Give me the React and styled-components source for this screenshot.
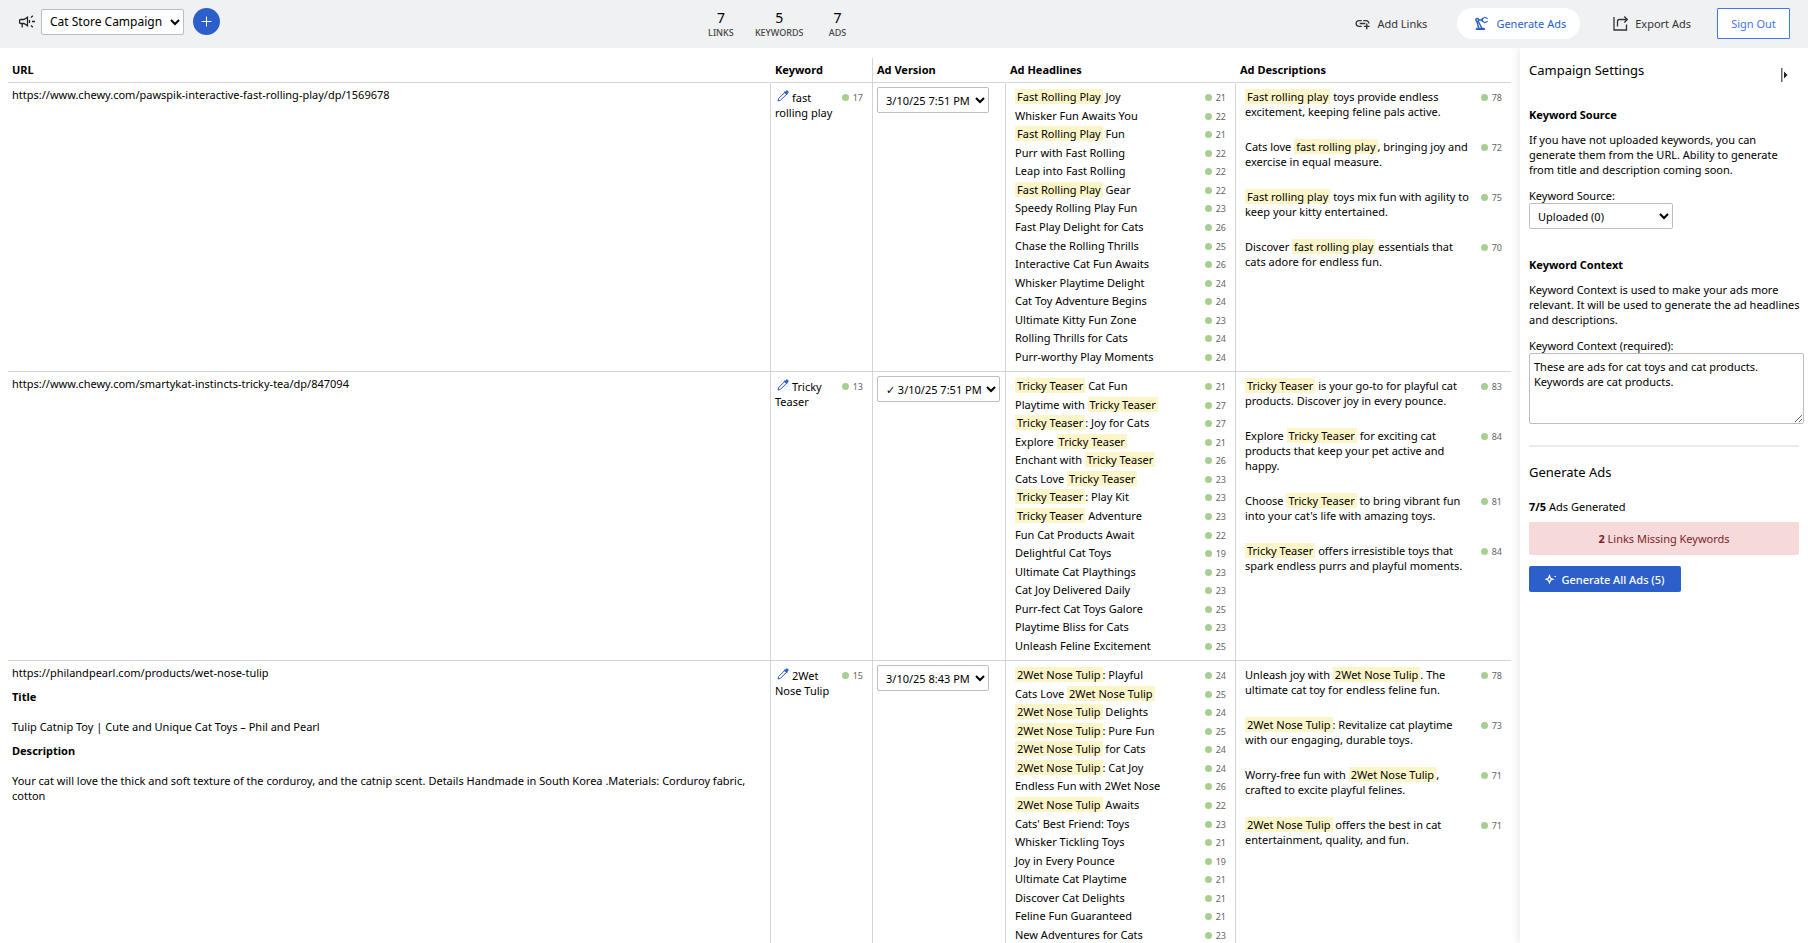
import React from "react";
import styled, { createGlobalStyle, css } from "styled-components";
import { MdAddLink, MdOutlinePrecisionManufacturing } from "react-icons/md";

const GlobalStyle = createGlobalStyle`
  *, *::before, *::after { box-sizing: border-box; }
  body {
    margin: 0;
    background: #fff;
    color: #000;
    font-family: "Noto Sans", sans-serif;
    font-size: 11px;
    line-height: 15px;
  }
  button, select, textarea { font-family: inherit; color: inherit; }
`;

const Page = styled.div`
  display: flex;
  flex-direction: column;
  height: 100vh;
  overflow: hidden;
`;

const TopBar = styled.header`
  display: flex;
  justify-content: space-between;
  align-items: flex-start;
  flex: none;
  height: 48px;
  padding: 8px 18px;
  background: #eff1f3;
`;

const CampaignPicker = styled.div`
  display: flex;
  align-items: center;
`;

const CampaignLabel = styled.label`
  display: flex;
  width: 23px;
`;

const Select = styled.select`
  height: 26px;
  width: ${(p) => p.$width}px;
  padding: 0 0 0 4px;
  border: 1px solid #bdbdbd;
  border-radius: 2px;
  background: #fff;
  font-size: ${(p) => (p.$small ? 11 : 12)}px;
`;

const AddButton = styled.button`
  display: grid;
  place-items: center;
  width: 27px;
  height: 27px;
  margin-left: 9px;
  padding: 0;
  border: 0;
  border-radius: 50%;
  background: #2c5fc9;
  color: #fff;
`;

const Stats = styled.dl`
  display: flex;
  gap: 21px;
  margin: 0;
  padding-top: 1px;
`;

const Stat = styled.div`
  display: flex;
  flex-direction: column-reverse;
  align-items: center;
  min-width: 26px;
`;

const StatValue = styled.dd`
  margin: 0;
  font-size: 14px;
  line-height: 18px;
`;

const StatLabel = styled.dt`
  font-size: 9px;
  line-height: 12px;
  font-weight: 500;
  color: #444;
  text-transform: uppercase;
`;

const Nav = styled.nav`
  display: flex;
  align-items: center;
  gap: 16px;
`;

const NavButton = styled.button`
  display: flex;
  align-items: center;
  gap: 6px;
  height: 31px;
  padding: 0 14px 0 16px;
  border: 0;
  border-radius: 16px;
  background: transparent;
  color: #333;
  font-size: 11px;
  svg { width: 17px; height: 17px; }
  &:last-of-type { margin-left: 0; }
  ${(p) =>
    p.$active &&
    css`
      background: #fff;
      color: #2c5fc9;
    `}
`;

const SignOut = styled.button`
  width: 73px;
  height: 31px;
  margin-left: -4px;
  padding: 0;
  border: 1px solid #3f76ee;
  border-radius: 1px;
  background: #fff;
  color: #3f76ee;
  font-size: 11px;
`;

const Body = styled.div`
  display: flex;
  flex: 1;
  min-height: 0;
`;

const Main = styled.main`
  flex: 1;
  min-width: 0;
  padding: 10px 9px 0 8px;
  overflow-y: auto;
  scrollbar-width: none;
`;

const AdTable = styled.table`
  width: 100%;
  table-layout: fixed;
  border-collapse: separate;
  border-spacing: 0;
`;

const Col = styled.col`
  width: ${(p) => (p.$width ? `${p.$width}px` : "auto")};
`;

const HeadCell = styled.th`
  height: 25px;
  padding: 0 4px 1px;
  border-bottom: 1px solid #d3d5d9;
  border-left: 1px solid ${(p) => (p.$divided ? "#d3d5d9" : "transparent")};
  text-align: left;
  font-weight: 700;
  font-size: 11px;
  &:first-child { border-left: 0; }
`;

const Cell = styled.td`
  height: 289px;
  padding: ${(p) => p.$pad || "4px"};
  border-bottom: 1px solid #d3d5d9;
  border-left: 1px solid #d3d5d9;
  vertical-align: top;
  &:first-child { border-left: 0; }
`;

const SubHeading = styled.h4`
  margin: 9px 0 15px;
  font-size: 11px;
  font-weight: 700;
`;

const Paragraph = styled.p`
  margin: 0;
`;

const KeywordRow = styled.div`
  display: flex;
  justify-content: space-between;
  align-items: flex-start;
`;

const KeywordText = styled.span`
  width: 62px;
  padding-top: 1px;
`;

const EditButton = styled.button`
  padding: 0;
  margin: 0 3px 0 2px;
  border: 0;
  background: none;
  color: #2c5fc9;
  height: 12px;
  line-height: 0;
`;

const Count = styled.span`
  display: inline-flex;
  align-items: center;
  gap: 4px;
  flex: none;
  height: 15px;
  margin-top: 1px;
  font-size: 9px;
  color: #666;
  &::before {
    content: "";
    width: 7px;
    height: 7px;
    border-radius: 50%;
    background: #a8ce92;
  }
`;

const HeadlineList = styled.ul`
  display: flex;
  flex-direction: column;
  justify-content: space-between;
  height: 276px;
  margin: 0;
  padding: 0;
  list-style: none;
`;

const DescriptionList = styled.ul`
  display: flex;
  flex-direction: column;
  gap: 20px;
  margin: 0;
  padding: 0;
  list-style: none;
`;

const AdLine = styled.li`
  display: flex;
  justify-content: space-between;
  align-items: flex-start;
  gap: 8px;
`;

const Mark = styled.mark`
  padding: 0 2px;
  background: #fcf5c8;
  color: inherit;
`;

const Sidebar = styled.aside`
  flex: none;
  width: 288px;
  padding: 13px 4px 13px 9px;
  background: #fff;
  box-shadow: 0 0 10px rgba(0, 0, 0, 0.12);
  clip-path: inset(0 0 0 -12px);
`;

const SidebarHead = styled.div`
  display: flex;
  justify-content: space-between;
  align-items: flex-start;
`;

const PanelTitle = styled.h2`
  margin: 0;
  font-size: 13px;
  line-height: 18px;
  font-weight: 400;
`;

const CollapseButton = styled.button`
  margin: 7px 16px 0 0;
  padding: 0;
  border: 0;
  background: none;
  line-height: 0;
`;

const Section = styled.section`
  padding-top: ${(p) => p.$top}px;
`;

const SectionTitle = styled.h3`
  margin: 0 0 10px;
  font-size: 11px;
  font-weight: 700;
`;

const FieldLabel = styled.label`
  display: block;
  margin-top: 11px;
`;

const ContextInput = styled.textarea`
  display: block;
  width: 100%;
  height: 71px;
  padding: 5px 4px;
  border: 1px solid #bdbdbd;
  border-radius: 2px;
  font-size: 11px;
  line-height: 15px;
`;

const Divider = styled.hr`
  height: 2px;
  margin: 21px 5px 16px 0;
  border: 0;
  background: #ebebeb;
`;

const Generated = styled.p`
  margin: 18px 0 8px;
`;

const Alert = styled.div`
  margin-right: 5px;
  padding: 9px;
  border-radius: 2px;
  background: #f6d9db;
  color: #7c2529;
  text-align: center;
`;

const PrimaryButton = styled.button`
  display: flex;
  align-items: center;
  justify-content: center;
  gap: 4px;
  width: 152px;
  height: 26px;
  margin-top: 11px;
  padding: 0;
  border: 0;
  border-radius: 2px;
  background: #2c5fc9;
  color: #fff;
  font-size: 11px;
  font-weight: 500;
`;

const CampaignIcon = () => (
  <svg width="18" height="16" viewBox="0 0 18 16" fill="none" stroke="#222" strokeWidth="1.300" aria-hidden="true">
    <path d="M9.500 3.200v8.600L6 9.500H2.600a1 1 0 0 1-1-1v-2a1 1 0 0 1 1-1H6z" />
    <path d="M4.200 9.500v4" />
    <path d="M11.500 6v3M14 7.500h3M13 3.500l1.800-1.700M13 11.500l1.800 1.700" />
  </svg>
);

const PlusIcon = () => (
  <svg width="11" height="11" viewBox="0 0 11 11" stroke="currentColor" aria-hidden="true">
    <path d="M5.500 .5v10M.5 5.500h10" />
  </svg>
);

const ExportIcon = () => (
  <svg viewBox="0 0 17 17" fill="none" stroke="currentColor" strokeWidth="1.300" aria-hidden="true">
    <path d="M2 2v13h12.500V9.500" />
    <path d="M5.500 11.500V6.500a2 2 0 0 1 2-2H15M12.300 1.500l3 3-3 3" />
  </svg>
);

const PencilIcon = () => (
  <svg width="12" height="12" viewBox="0 0 12 12" fill="none" stroke="currentColor" strokeLinejoin="round" aria-hidden="true">
    <path d="M1 11l.7-2.500L7.500 2.700l1.800 1.800-5.800 5.800z" />
    <path d="M7.200 2l.8.300 1.100-1.100a1 1 0 0 1 1.700 1.700L9.700 4l.3.800z" fill="currentColor" />
  </svg>
);

const SparkIcon = () => (
  <svg width="12" height="10" viewBox="0 0 12 10" fill="none" stroke="currentColor" strokeWidth="1.200" aria-hidden="true">
    <path d="M4.500 1.700L5.500 4.200 8 5.200 5.500 6.200 4.500 8.700 3.500 6.200 1 5.200 3.500 4.200z" />
    <path d="M9.500 2.500h1.500" />
  </svg>
);

const CollapseIcon = () => (
  <svg width="7" height="14" viewBox="0 0 7 14" aria-hidden="true">
    <path d="M0 0h1.500v14H0z" fill="#666" />
    <path d="M3 3.500L6.500 7 3 10.500z" fill="#222" />
  </svg>
);

const rows = [
  {
    url: "https://www.chewy.com/pawspik-interactive-fast-rolling-play/dp/1569678",
    keyword: "fast rolling play",
    count: 17,
    version: "3/10/25 7:51 PM",
    versionWidth: 112,
    headlines: [
      ["[Fast Rolling Play] Joy", 21], ["Whisker Fun Awaits You", 22], ["[Fast Rolling Play] Fun", 21],
      ["Purr with Fast Rolling", 22], ["Leap into Fast Rolling", 22], ["[Fast Rolling Play] Gear", 22],
      ["Speedy Rolling Play Fun", 23], ["Fast Play Delight for Cats", 26], ["Chase the Rolling Thrills", 25],
      ["Interactive Cat Fun Awaits", 26], ["Whisker Playtime Delight", 24], ["Cat Toy Adventure Begins", 24],
      ["Ultimate Kitty Fun Zone", 23], ["Rolling Thrills for Cats", 24], ["Purr-worthy Play Moments", 24],
    ],
    descriptions: [
      ["[Fast rolling play] toys provide endless excitement, keeping feline pals active.", 78],
      ["Cats love [fast rolling play], bringing joy and exercise in equal measure.", 72],
      ["[Fast rolling play] toys mix fun with agility to keep your kitty entertained.", 75],
      ["Discover [fast rolling play] essentials that cats adore for endless fun.", 70],
    ],
  },
  {
    url: "https://www.chewy.com/smartykat-instincts-tricky-tea/dp/847094",
    keyword: "Tricky Teaser",
    count: 13,
    version: "✓ 3/10/25 7:51 PM",
    versionWidth: 123,
    headlines: [
      ["[Tricky Teaser] Cat Fun", 21], ["Playtime with [Tricky Teaser]", 27], ["[Tricky Teaser]: Joy for Cats", 27],
      ["Explore [Tricky Teaser]", 21], ["Enchant with [Tricky Teaser]", 26], ["Cats Love [Tricky Teaser]", 23],
      ["[Tricky Teaser]: Play Kit", 23], ["[Tricky Teaser] Adventure", 23], ["Fun Cat Products Await", 22],
      ["Delightful Cat Toys", 19], ["Ultimate Cat Playthings", 23], ["Cat Joy Delivered Daily", 23],
      ["Purr-fect Cat Toys Galore", 25], ["Playtime Bliss for Cats", 23], ["Unleash Feline Excitement", 25],
    ],
    descriptions: [
      ["[Tricky Teaser] is your go-to for playful cat products. Discover joy in every pounce.", 83],
      ["Explore [Tricky Teaser] for exciting cat products that keep your pet active and happy.", 84],
      ["Choose [Tricky Teaser] to bring vibrant fun into your cat's life with amazing toys.", 81],
      ["[Tricky Teaser] offers irresistible toys that spark endless purrs and playful moments.", 84],
    ],
  },
  {
    url: "https://philandpearl.com/products/wet-nose-tulip",
    title: "Tulip Catnip Toy | Cute and Unique Cat Toys – Phil and Pearl",
    description:
      "Your cat will love the thick and soft texture of the corduroy, and the catnip scent. Details Handmade in South Korea .Materials: Corduroy fabric, cotton",
    keyword: "2Wet Nose Tulip",
    count: 15,
    version: "3/10/25 8:43 PM",
    versionWidth: 112,
    headlines: [
      ["[2Wet Nose Tulip]: Playful", 24], ["Cats Love [2Wet Nose Tulip]", 25], ["[2Wet Nose Tulip] Delights", 24],
      ["[2Wet Nose Tulip]: Pure Fun", 25], ["[2Wet Nose Tulip] for Cats", 24], ["[2Wet Nose Tulip]: Cat Joy", 24],
      ["Endless Fun with 2Wet Nose", 26], ["[2Wet Nose Tulip] Awaits", 22], ["Cats' Best Friend: Toys", 23],
      ["Whisker Tickling Toys", 21], ["Joy in Every Pounce", 19], ["Ultimate Cat Playtime", 21],
      ["Discover Cat Delights", 21], ["Feline Fun Guaranteed", 21], ["New Adventures for Cats", 23],
    ],
    descriptions: [
      ["Unleash joy with [2Wet Nose Tulip]. The ultimate cat toy for endless feline fun.", 78],
      ["[2Wet Nose Tulip]: Revitalize cat playtime with our engaging, durable toys.", 73],
      ["Worry-free fun with [2Wet Nose Tulip], crafted to excite playful felines.", 71],
      ["[2Wet Nose Tulip] offers the best in cat entertainment, quality, and fun.", 71],
    ],
  },
];

/* Text between square brackets is the keyword and gets highlighted. */
const Highlighted = ({ text }) => (
  <span>
    {text.split(/(\[[^\]]+\])/).map((part, i) =>
      part.startsWith("[") ? <Mark key={i}>{part.slice(1, -1)}</Mark> : part
    )}
  </span>
);

const AdLines = ({ as: List, items }) => (
  <List>
    {items.map(([text, count]) => (
      <AdLine key={text}>
        <Highlighted text={text} />
        <Count>{count}</Count>
      </AdLine>
    ))}
  </List>
);

const AdRow = ({ row }) => (
  <tr>
    <Cell>
      <Paragraph>{row.url}</Paragraph>
      {row.title && (
        <>
          <SubHeading>Title</SubHeading>
          <Paragraph>{row.title}</Paragraph>
          <SubHeading>Description</SubHeading>
          <Paragraph>{row.description}</Paragraph>
        </>
      )}
    </Cell>
    <Cell $pad="6px 9px 0 4px">
      <KeywordRow>
        <KeywordText>
          <EditButton type="button" aria-label={`Edit keyword ${row.keyword}`}>
            <PencilIcon />
          </EditButton>
          {row.keyword}
        </KeywordText>
        <Count>{row.count}</Count>
      </KeywordRow>
    </Cell>
    <Cell $pad="4px">
      <Select $small $width={row.versionWidth} aria-label={`Ad version for ${row.keyword}`}>
        <option>{row.version}</option>
      </Select>
    </Cell>
    <Cell $pad="6px 9px 0">
      <AdLines as={HeadlineList} items={row.headlines} />
    </Cell>
    <Cell $pad="6px 9px 0">
      <AdLines as={DescriptionList} items={row.descriptions} />
    </Cell>
  </tr>
);

export default function App() {
  return (
    <Page>
      <GlobalStyle />
      <TopBar>
        <CampaignPicker>
          <CampaignLabel htmlFor="campaign" aria-label="Campaign">
            <CampaignIcon />
          </CampaignLabel>
          <Select id="campaign" $width={143}>
            <option>Cat Store Campaign</option>
          </Select>
          <AddButton type="button" aria-label="Add campaign">
            <PlusIcon />
          </AddButton>
        </CampaignPicker>
        <Stats>
          {[["Links", 7], ["Keywords", 5], ["Ads", 7]].map(([label, value]) => (
            <Stat key={label}>
              <StatLabel>{label}</StatLabel>
              <StatValue>{value}</StatValue>
            </Stat>
          ))}
        </Stats>
        <Nav>
          <NavButton type="button"><MdAddLink />Add Links</NavButton>
          <NavButton type="button" $active><MdOutlinePrecisionManufacturing />Generate Ads</NavButton>
          <NavButton type="button"><ExportIcon />Export Ads</NavButton>
          <SignOut type="button">Sign Out</SignOut>
        </Nav>
      </TopBar>
      <Body>
        <Main>
          <AdTable>
            <colgroup>
              <Col />
              <Col $width={102} />
              <Col $width={133} />
              <Col $width={230} />
              <Col $width={276} />
            </colgroup>
            <thead>
              <tr>
                <HeadCell>URL</HeadCell>
                <HeadCell>Keyword</HeadCell>
                <HeadCell $divided>Ad Version</HeadCell>
                <HeadCell>Ad Headlines</HeadCell>
                <HeadCell>Ad Descriptions</HeadCell>
              </tr>
            </thead>
            <tbody>
              {rows.map((row) => <AdRow key={row.url} row={row} />)}
            </tbody>
          </AdTable>
        </Main>
        <Sidebar>
          <SidebarHead>
            <PanelTitle>Campaign Settings</PanelTitle>
            <CollapseButton type="button" aria-label="Collapse settings"><CollapseIcon /></CollapseButton>
          </SidebarHead>
          <Section $top={25}>
            <SectionTitle>Keyword Source</SectionTitle>
            <Paragraph>
              If you have not uploaded keywords, you can generate them from the URL. Ability to generate from title and
              description coming soon.
            </Paragraph>
            <FieldLabel htmlFor="source">Keyword Source:</FieldLabel>
            <Select id="source" $small $width={144}>
              <option>Uploaded (0)</option>
            </Select>
          </Section>
          <Section $top={28}>
            <SectionTitle>Keyword Context</SectionTitle>
            <Paragraph>
              Keyword Context is used to make your ads more relevant. It will be used to generate the ad headlines and
              descriptions.
            </Paragraph>
            <FieldLabel htmlFor="context">Keyword Context (required):</FieldLabel>
            <ContextInput
              id="context"
              defaultValue={"These are ads for cat toys and cat products. Keywords are cat products."}
            />
          </Section>
          <Divider />
          <PanelTitle>Generate Ads</PanelTitle>
          <Generated><strong>7/5</strong> Ads Generated</Generated>
          <Alert><strong>2</strong> Links Missing Keywords</Alert>
          <PrimaryButton type="button"><SparkIcon />Generate All Ads (5)</PrimaryButton>
        </Sidebar>
      </Body>
    </Page>
  );
}
